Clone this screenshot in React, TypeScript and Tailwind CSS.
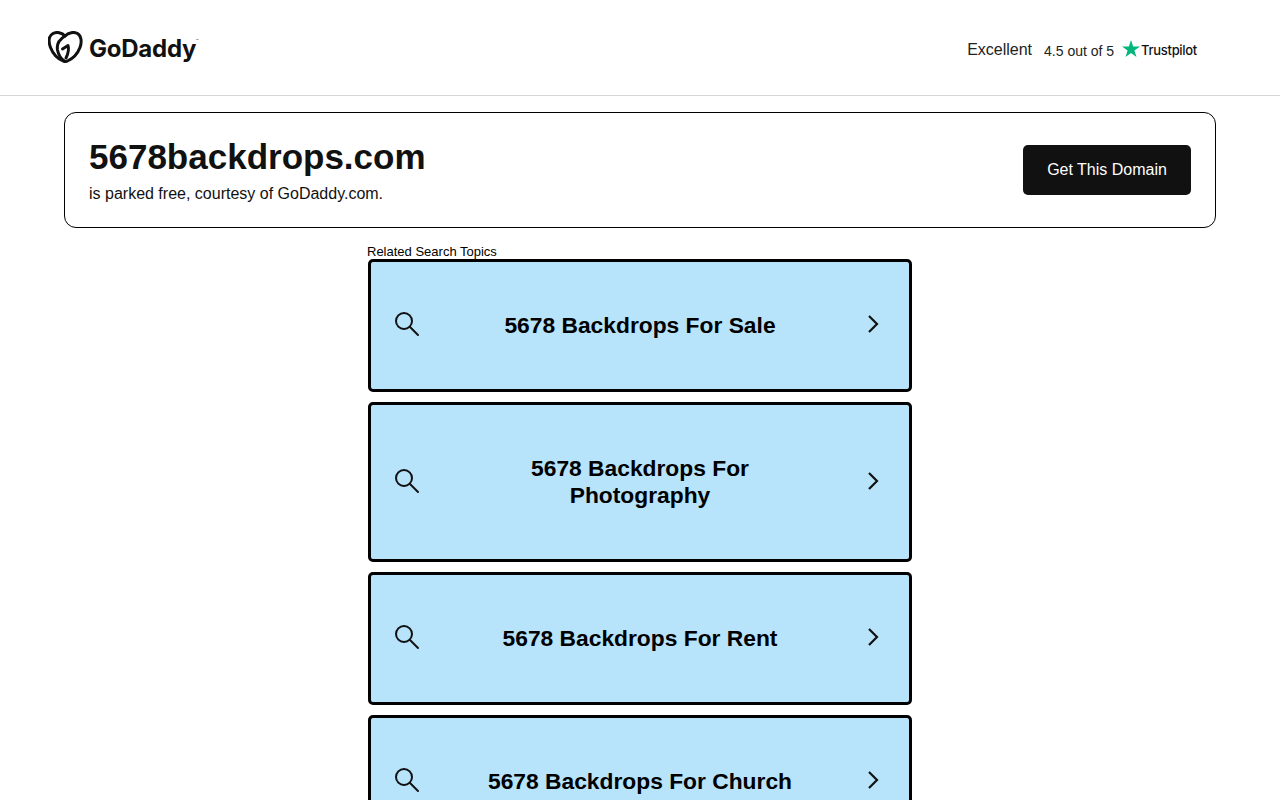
const topics = [
  "5678 Backdrops For Sale",
  "5678 Backdrops For Photography",
  "5678 Backdrops For Rent",
  "5678 Backdrops For Church",
];

function GoHeart() {
  return (
    <svg className="-mt-[1px]" width="35" height="32" viewBox="0 0 35 32" fill="none" stroke="#111" strokeWidth="3" strokeLinecap="round" strokeLinejoin="round">
      <path d="M17 5C14 1.500 8.500.5 5 2.500.5 5 .5 11 2.500 16.500 5 23 10.500 28 15 30c1.500.7 3 .7 4.500 0C25 27.500 29.500 23 32 16.500 34 11 33.500 5 29.500 2.500 26 .5 20.500 1.500 17 5z" />
      <path d="M17 5C12 8 8.500 13 9.500 19c1 5 3.500 9 7 11" />
      <path d="M14.500 18L20 14.500c1 3.500.5 7.500-2 12.500" />
    </svg>
  );
}

function TrustStar() {
  return (
    <svg width="18" height="17" viewBox="0 0 18 17" fill="#00b67a">
      <path d="M9 0l2.100 6.500H18l-5.600 4 2.100 6.500L9 13l-5.500 4 2.100-6.500-5.600-4h6.900z" />
    </svg>
  );
}

function SearchIcon() {
  return (
    <svg className="shrink-0" width="28" height="30" viewBox="0 0 28 30" fill="none" stroke="#111" strokeWidth="2">
      <circle cx="9" cy="12" r="8" />
      <path d="M15 18l8 8" strokeLinecap="round" />
    </svg>
  );
}

function ChevronIcon() {
  return (
    <svg className="shrink-0" width="28" height="30" viewBox="0 0 28 30" fill="none" stroke="#111" strokeWidth="2.2">
      <path d="M12 7l8 8-8 8" />
    </svg>
  );
}

function TopicCard({ label }: { label: string }) {
  return (
    <div className="flex items-center justify-between rounded-[5px] border-[3px] border-black bg-[#b7e3fb] pt-[47px] pr-[24px] pb-[50px] pl-[24px]">
      <SearchIcon />
      <div className="w-[340px] pt-[3px] text-center text-[22.8px] leading-[27px] font-bold text-black">{label}</div>
      <ChevronIcon />
    </div>
  );
}

export default function App() {
  return (
    <div className="h-[800px] overflow-hidden bg-white font-['Liberation_Sans',Arial,sans-serif] text-[#111]">
      <header className="flex h-[96px] items-center justify-between border-b border-[#d6d6d6] pr-[83px] pl-[48px]">
        <div className="flex items-center gap-[6px]">
          <GoHeart />
          <span className="relative pt-[2px] font-['Inter',sans-serif] text-[24px] leading-none font-bold tracking-[-0.25px]">
            GoDaddy
            <span className="absolute top-[4px] -right-[2px] text-[4px] leading-none font-normal">™</span>
          </span>
        </div>
        <div className="flex items-center pt-[4px]">
          <span className="text-[16px] text-[#222]">Excellent</span>
          <span className="ml-3 pt-[3px] text-[14px] text-[#222]">4.5 out of 5</span>
          <span className="ml-2 flex items-center">
            <span className="-mt-[2px]">
              <TrustStar />
            </span>
            <span className="ml-[1px] pt-[3px] font-['Inter',sans-serif] text-[13px] font-medium tracking-[-0.3px]">Trustpilot</span>
          </span>
        </div>
      </header>
      <main className="flex flex-col items-center px-16 pt-4">
        <section className="flex h-[116px] w-full items-center justify-between rounded-xl border border-black pr-6 pl-6">
          <div>
            <h1 className="text-[35px] leading-[40px] font-bold">5678backdrops.com</h1>
            <p className="mt-[8px] text-[16px] leading-[18px] text-[#111]">is parked free, courtesy of GoDaddy.com.</p>
          </div>
          <button className="h-[50px] w-[168px] rounded-[5px] bg-[#111] text-[16px] text-white">Get This Domain</button>
        </section>
        <div className="mt-4 w-[546px]">
          <div className="text-[13px] leading-[15px] text-black">Related Search Topics</div>
          <div className="ml-[1px] flex w-[544px] flex-col gap-[10px]">
            {topics.map((t) => (
              <TopicCard key={t} label={t} />
            ))}
          </div>
        </div>
      </main>
    </div>
  );
}
